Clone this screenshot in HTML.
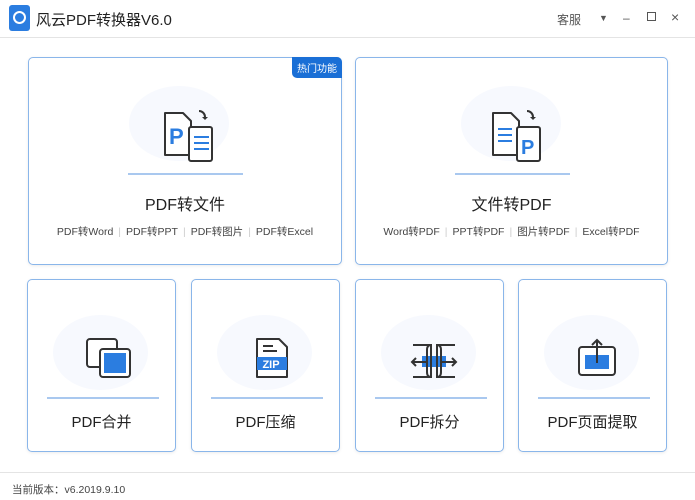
<!DOCTYPE html>
<html><head><meta charset="utf-8"><style>
*{margin:0;padding:0;box-sizing:border-box}
body{width:695px;height:500px;background:#fff;font-family:"Liberation Sans","Noto Sans CJK SC",sans-serif;color:#333;position:relative;overflow:hidden}
.top{position:absolute;left:0;top:0;width:695px;height:38px;border-bottom:1px solid #e4e4e4}
.logo{position:absolute;left:9px;top:5px;width:21px;height:26px;background:#2b7de0;border-radius:3px}
.logo:after{content:"";position:absolute;left:4px;top:6px;width:9px;height:9px;border:2.5px solid #fff;border-radius:50%}
.title{position:absolute;left:36px;top:9px;font-size:15px;color:#222}
.ctl{position:absolute;top:11px;font-size:12px;color:#555}
.card{position:absolute;border:1.3px solid #8ab6ea;border-radius:5px;background:#fff;box-shadow:0 1px 3px rgba(0,0,0,.08)}
.blob{position:absolute;border-radius:50%;background:#f7f9fe}
.line{position:absolute;height:1.5px;background:#a9c8ef}
.t{position:absolute;left:0;right:0;text-align:center;font-size:16px;color:#222}
.s{position:absolute;left:0;right:0;text-align:center;font-size:10.5px;color:#444}
.s i{font-style:normal;color:#ccc;margin:0 5px}
.tag{position:absolute;right:-1px;top:-1px;background:#1a6fd6;color:#fff;font-size:10px;padding:3px 5px;border-radius:0 5px 0 5px}
.foot{position:absolute;left:0;top:472px;width:695px;border-top:1px solid #e4e4e4;height:28px;font-size:10.5px;color:#444;padding:9px 0 0 12px}
</style></head><body>
<div class="top">
<div class="logo"></div>
<div class="title">风云PDF转换器V6.0</div>
<div class="ctl" style="left:557px">客服</div>
<div class="ctl" style="left:599px;font-size:9px;top:13px">▼</div>
<div class="ctl" style="left:623px">–</div>
<div class="ctl" style="left:647px;top:12px;width:9px;height:9px;border:1.3px solid #555"></div>
<div class="ctl" style="left:671px;top:9px;font-size:14px">×</div>
</div>

<div class="card" style="left:28px;top:57px;width:314px;height:208px">
<div class="tag">热门功能</div>
<div class="blob" style="left:100px;top:28px;width:100px;height:75px"></div>
<svg style="position:absolute;left:132px;top:51px" width="62" height="56" viewBox="0 0 62 56">
<path d="M4 4h18l8 8v34H4z" fill="#fff" stroke="#333" stroke-width="2" stroke-linejoin="round"/>
<text x="8" y="35" font-family="Liberation Sans" font-weight="bold" font-size="22" fill="#2b7de0">P</text>
<rect x="28" y="18" width="23" height="34" fill="#fff" stroke="#333" stroke-width="2" rx="2"/>
<path d="M33 28h15M33 34h15M33 40h15" stroke="#2b7de0" stroke-width="2"/>
<path d="M38 2a6 6 0 0 1 6 6" fill="none" stroke="#333" stroke-width="2"/><path d="M41 8h6l-3 3z" fill="#333"/>
</svg>
<div class="line" style="left:99px;top:115px;width:115px"></div>
<div class="t" style="top:133px">PDF转文件</div>
<div class="s" style="top:166px">PDF转Word<i>|</i>PDF转PPT<i>|</i>PDF转图片<i>|</i>PDF转Excel</div>
</div>

<div class="card" style="left:355px;top:57px;width:313px;height:208px">
<div class="blob" style="left:105px;top:28px;width:100px;height:75px"></div>
<svg style="position:absolute;left:133px;top:51px" width="62" height="56" viewBox="0 0 62 56">
<path d="M4 4h18l8 8v34H4z" fill="#fff" stroke="#333" stroke-width="2" stroke-linejoin="round"/>
<path d="M9 20h14M9 26h14M9 32h14" stroke="#2b7de0" stroke-width="2"/>
<rect x="28" y="18" width="23" height="34" fill="#fff" stroke="#333" stroke-width="2" rx="2"/>
<text x="32" y="45" font-family="Liberation Sans" font-weight="bold" font-size="20" fill="#2b7de0">P</text>
<path d="M38 2a6 6 0 0 1 6 6" fill="none" stroke="#333" stroke-width="2"/><path d="M41 8h6l-3 3z" fill="#333"/>
</svg>
<div class="line" style="left:99px;top:115px;width:115px"></div>
<div class="t" style="top:133px">文件转PDF</div>
<div class="s" style="top:166px">Word转PDF<i>|</i>PPT转PDF<i>|</i>图片转PDF<i>|</i>Excel转PDF</div>
</div>

<div class="card" style="left:27px;top:279px;width:149px;height:173px">
<div class="blob" style="left:25px;top:35px;width:95px;height:75px"></div>
<svg style="position:absolute;left:57px;top:57px" width="48" height="42" viewBox="0 0 48 42">
<rect x="2" y="2" width="30" height="28" rx="3" fill="#fff" stroke="#333" stroke-width="2"/>
<rect x="15" y="12" width="30" height="28" rx="3" fill="#fff" stroke="#333" stroke-width="2"/>
<rect x="19" y="16" width="22" height="20" fill="#2b7de0"/>
</svg>
<div class="line" style="left:19px;top:117px;width:112px"></div>
<div class="t" style="top:131px;font-size:15px">PDF合并</div>
</div>

<div class="card" style="left:191px;top:279px;width:149px;height:173px">
<div class="blob" style="left:25px;top:35px;width:95px;height:75px"></div>
<svg style="position:absolute;left:62px;top:57px" width="36" height="42" viewBox="0 0 36 42">
<path d="M3 2h22l8 8v30H3z" fill="#fff" stroke="#333" stroke-width="2" stroke-linejoin="round"/>
<path d="M9 9h10M9 14h14" stroke="#333" stroke-width="2"/>
<rect x="3" y="20" width="30" height="13" fill="#2b7de0"/>
<text x="17" y="31" text-anchor="middle" font-family="Liberation Sans" font-weight="bold" font-size="11" fill="#fff">ZIP</text>
</svg>
<div class="line" style="left:19px;top:117px;width:112px"></div>
<div class="t" style="top:131px;font-size:15px">PDF压缩</div>
</div>

<div class="card" style="left:355px;top:279px;width:149px;height:173px">
<div class="blob" style="left:25px;top:35px;width:95px;height:75px"></div>
<svg style="position:absolute;left:54px;top:63px" width="48" height="36" viewBox="0 0 48 36">
<rect x="12" y="13" width="24" height="11" fill="#2b7de0"/>
<path d="M3 2h18v32H3M45 2H27v32h18M21 2c-3 0-4 2-4 5v22c0 3 1 5 4 5M27 2c3 0 4 2 4 5v22c0 3-1 5-4 5" fill="none" stroke="#333" stroke-width="2"/>
<path d="M2 19h14M6 15l-4 4 4 4M32 19h14M42 15l4 4-4 4" fill="none" stroke="#333" stroke-width="2"/>
</svg>
<div class="line" style="left:19px;top:117px;width:112px"></div>
<div class="t" style="top:131px;font-size:15px">PDF拆分</div>
</div>

<div class="card" style="left:518px;top:279px;width:149px;height:173px">
<div class="blob" style="left:25px;top:35px;width:95px;height:75px"></div>
<svg style="position:absolute;left:57px;top:57px" width="42" height="40" viewBox="0 0 42 40">
<rect x="3" y="10" width="36" height="28" rx="3" fill="#fff" stroke="#333" stroke-width="2"/>
<rect x="9" y="18" width="24" height="14" fill="#2b7de0"/>
<path d="M21 26V3M16 8l5-5 5 5" fill="none" stroke="#333" stroke-width="2"/>
</svg>
<div class="line" style="left:19px;top:117px;width:112px"></div>
<div class="t" style="top:131px;font-size:15px">PDF页面提取</div>
</div>

<div class="foot">当前版本：v6.2019.9.10</div>
</body></html>
